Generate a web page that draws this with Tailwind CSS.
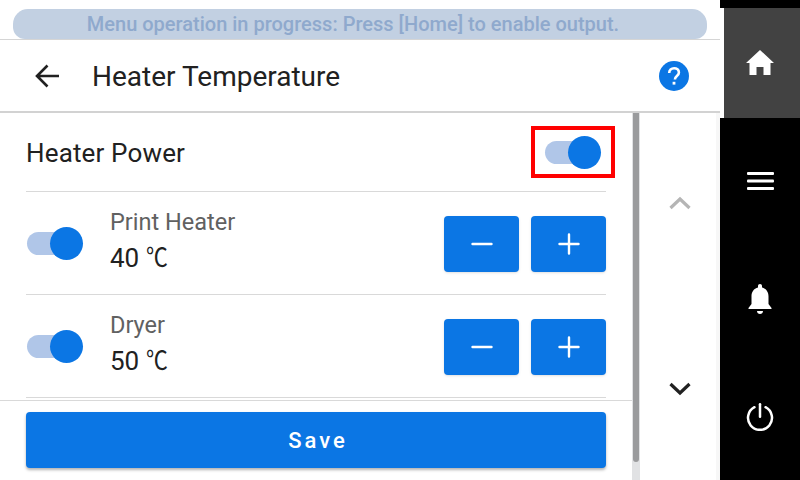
<!DOCTYPE html>
<html lang="en">
<head>
  <meta charset="UTF-8" />
  <title>Heater Temperature</title>
  <script src="https://cdn.jsdelivr.net/npm/@tailwindcss/browser@4"></script>
</head>
<body class="bg-white">
  <div class="flex w-[800px] h-[480px] overflow-hidden font-['Roboto','Noto_Sans_CJK_JP',sans-serif] text-[#212121]">

    <!-- main area -->
    <div class="w-[720px] flex flex-col">
      <!-- status banner -->
      <div class="h-[40px] pt-[9px] px-[13px] border-b border-[#d5d5d5]">
        <div class="h-[30px] pr-[14px] rounded-t-[15px] rounded-b-[12px] bg-[#c2d0e2] text-[#8fa9cd] text-[20px] font-medium text-center leading-[31px]">Menu operation in progress: Press [Home] to enable output.</div>
      </div>

      <!-- header -->
      <div class="h-[73px] flex items-center pl-[35px] pr-[31px] border-b-2 border-[#d2d2d2]">
        <svg class="w-[24px] h-[24px]" viewBox="0 0 24 24" fill="none" stroke="#212121" stroke-width="2.600">
          <path d="M24 12H2M12.500 1.500 2 12l10.500 10.500" />
        </svg>
        <div class="ml-[33px] text-[28px] leading-none pt-[3px]">Heater Temperature</div>
        <svg class="ml-auto w-[30px] h-[30px]" viewBox="0 0 30 30">
          <circle cx="15" cy="15" r="15" fill="#0b76e4" />
          <path d="M10.200 12c0-3 2.200-4.800 4.900-4.800s4.800 1.700 4.800 4.200c0 3.600-4 3.500-4 7" fill="none" stroke="#fff" stroke-width="2.600" />
          <rect x="13.600" y="20.800" width="2.800" height="2.800" fill="#fff" />
        </svg>
      </div>

      <div class="flex-1 flex min-h-0">
        <div class="w-[632px] flex flex-col">
          <div class="h-[287px] px-[26px] overflow-hidden">
            <!-- heater power -->
            <div class="h-[79px] flex items-center border-b border-[#d9d9d9]">
              <div class="text-[26px] tracking-[0.15px] pt-[3px]">Heater Power</div>
              <div class="ml-auto mr-[-9px] w-[84px] h-[52px] border-4 border-[#ff0000] flex items-center pl-[10px]">
                <div class="relative w-[46px] h-[23px] rounded-full bg-[#b0c6e8]">
                  <div class="absolute right-[-10px] top-[-5px] w-[33px] h-[33px] rounded-full bg-[#0b76e4]"></div>
                </div>
              </div>
            </div>

            <!-- print heater -->
            <div class="h-[103px] pt-px flex items-center border-b border-[#d9d9d9]">
              <div class="relative w-[46px] h-[23px] ml-px rounded-full bg-[#b0c6e8]">
                <div class="absolute right-[-10px] top-[-5px] w-[33px] h-[33px] rounded-full bg-[#0b76e4]"></div>
              </div>
              <div class="ml-[37px] pb-px">
                <div class="text-[23.500px] leading-[30px] text-[#616161]">Print Heater</div>
                <div class="text-[26px] leading-[42px]">40 <span class="inline-block origin-left scale-x-[0.84]">℃</span></div>
              </div>
              <div class="ml-auto flex gap-3">
                <div class="w-[75px] h-[56px] rounded bg-[#0b76e4] shadow-sm flex items-center justify-center">
                  <svg class="w-[22px] h-[22px]" viewBox="0 0 22 22" stroke="#fff" stroke-width="2.400" stroke-linecap="round"><path d="M1.500 11h19" /></svg>
                </div>
                <div class="w-[75px] h-[56px] rounded bg-[#0b76e4] shadow-sm flex items-center justify-center">
                  <svg class="w-[22px] h-[22px]" viewBox="0 0 22 22" stroke="#fff" stroke-width="2.400" stroke-linecap="round"><path d="M1.500 11h19M11 1.500v19" /></svg>
                </div>
              </div>
            </div>

            <!-- dryer -->
            <div class="h-[103px] pt-px flex items-center border-b border-[#d9d9d9]">
              <div class="relative w-[46px] h-[23px] ml-px rounded-full bg-[#b0c6e8]">
                <div class="absolute right-[-10px] top-[-5px] w-[33px] h-[33px] rounded-full bg-[#0b76e4]"></div>
              </div>
              <div class="ml-[37px] pb-px">
                <div class="text-[23.500px] leading-[30px] text-[#616161]">Dryer</div>
                <div class="text-[26px] leading-[42px]">50 <span class="inline-block origin-left scale-x-[0.84]">℃</span></div>
              </div>
              <div class="ml-auto flex gap-3">
                <div class="w-[75px] h-[56px] rounded bg-[#0b76e4] shadow-sm flex items-center justify-center">
                  <svg class="w-[22px] h-[22px]" viewBox="0 0 22 22" stroke="#fff" stroke-width="2.400" stroke-linecap="round"><path d="M1.500 11h19" /></svg>
                </div>
                <div class="w-[75px] h-[56px] rounded bg-[#0b76e4] shadow-sm flex items-center justify-center">
                  <svg class="w-[22px] h-[22px]" viewBox="0 0 22 22" stroke="#fff" stroke-width="2.400" stroke-linecap="round"><path d="M1.500 11h19M11 1.500v19" /></svg>
                </div>
              </div>
            </div>
          </div>

          <!-- save -->
          <div class="flex-1 border-t border-[#d9d9d9] pt-[11px] px-[26px]">
            <div class="h-[56px] pl-1 rounded bg-[#0b76e4] shadow-[0_2px_3px_rgba(0,0,0,0.3)] flex items-center justify-center text-white text-[22px] font-medium tracking-[3px]">Save</div>
          </div>
        </div>

        <!-- scrollbar -->
        <div class="w-2 bg-[#e1e2e4] px-px">
          <div class="h-[349px] bg-[#9a9b9d] rounded-b-sm"></div>
        </div>

        <!-- page arrows -->
        <div class="w-[80px] flex flex-col items-center border-r-4 border-[#f7f7f7] pl-1 pt-[83px]">
          <svg class="w-[22px] h-[14px]" viewBox="0 0 22 14" fill="none" stroke="#b5b5b5" stroke-width="3.200"><path d="M1.500 12 11 3l9.500 9" /></svg>
          <svg class="w-[22px] h-[14px] mt-[172px]" viewBox="0 0 22 14" fill="none" stroke="#212121" stroke-width="3.200"><path d="M1.500 2 11 11l9.500-9" /></svg>
        </div>
      </div>
    </div>

    <!-- side nav -->
    <div class="w-[80px] bg-black flex flex-col">
      <div class="mt-2 h-[110px] bg-[#424242] border-l-4 border-white flex items-center justify-center">
        <svg class="w-[28px] h-[26px] mr-1 mb-px" viewBox="0 0 28 26" fill="#fff">
          <path d="M14 0 0 13h3.500v12h7v-8h7v8h7V13H28z" />
        </svg>
      </div>
      <div class="flex-1 flex flex-col items-center">
        <svg class="w-[27px] h-[18px] mt-[54px]" viewBox="0 0 27 18" fill="#fff">
          <rect y="0" width="27" height="3" rx="1" />
          <rect y="7.500" width="27" height="3" rx="1" />
          <rect y="15" width="27" height="3" rx="1" />
        </svg>
        <svg class="w-[24px] h-[30px] mt-[94px]" viewBox="0 0 24 30" fill="#fff">
          <path d="M12 0c1.200 0 2 .9 2 2v1.400c4.200 1 6.500 4.500 6.500 9V20l3 4v1H.5v-1l3-4v-7.600c0-4.500 2.300-8 6.500-9V2c0-1.100.8-2 2-2z" />
          <path d="M9 27h6c0 1.700-1.300 3-3 3s-3-1.300-3-3z" />
        </svg>
        <svg class="w-[28px] h-[28px] mt-[89px]" viewBox="0 0 28 28" fill="none" stroke="#fff" stroke-width="2.500" stroke-linecap="round">
          <path d="M14 1.300v12.500" />
          <path d="M8.500 4.200a12 12 0 1 0 11 0" />
        </svg>
      </div>
    </div>
  </div>
</body>
</html>
